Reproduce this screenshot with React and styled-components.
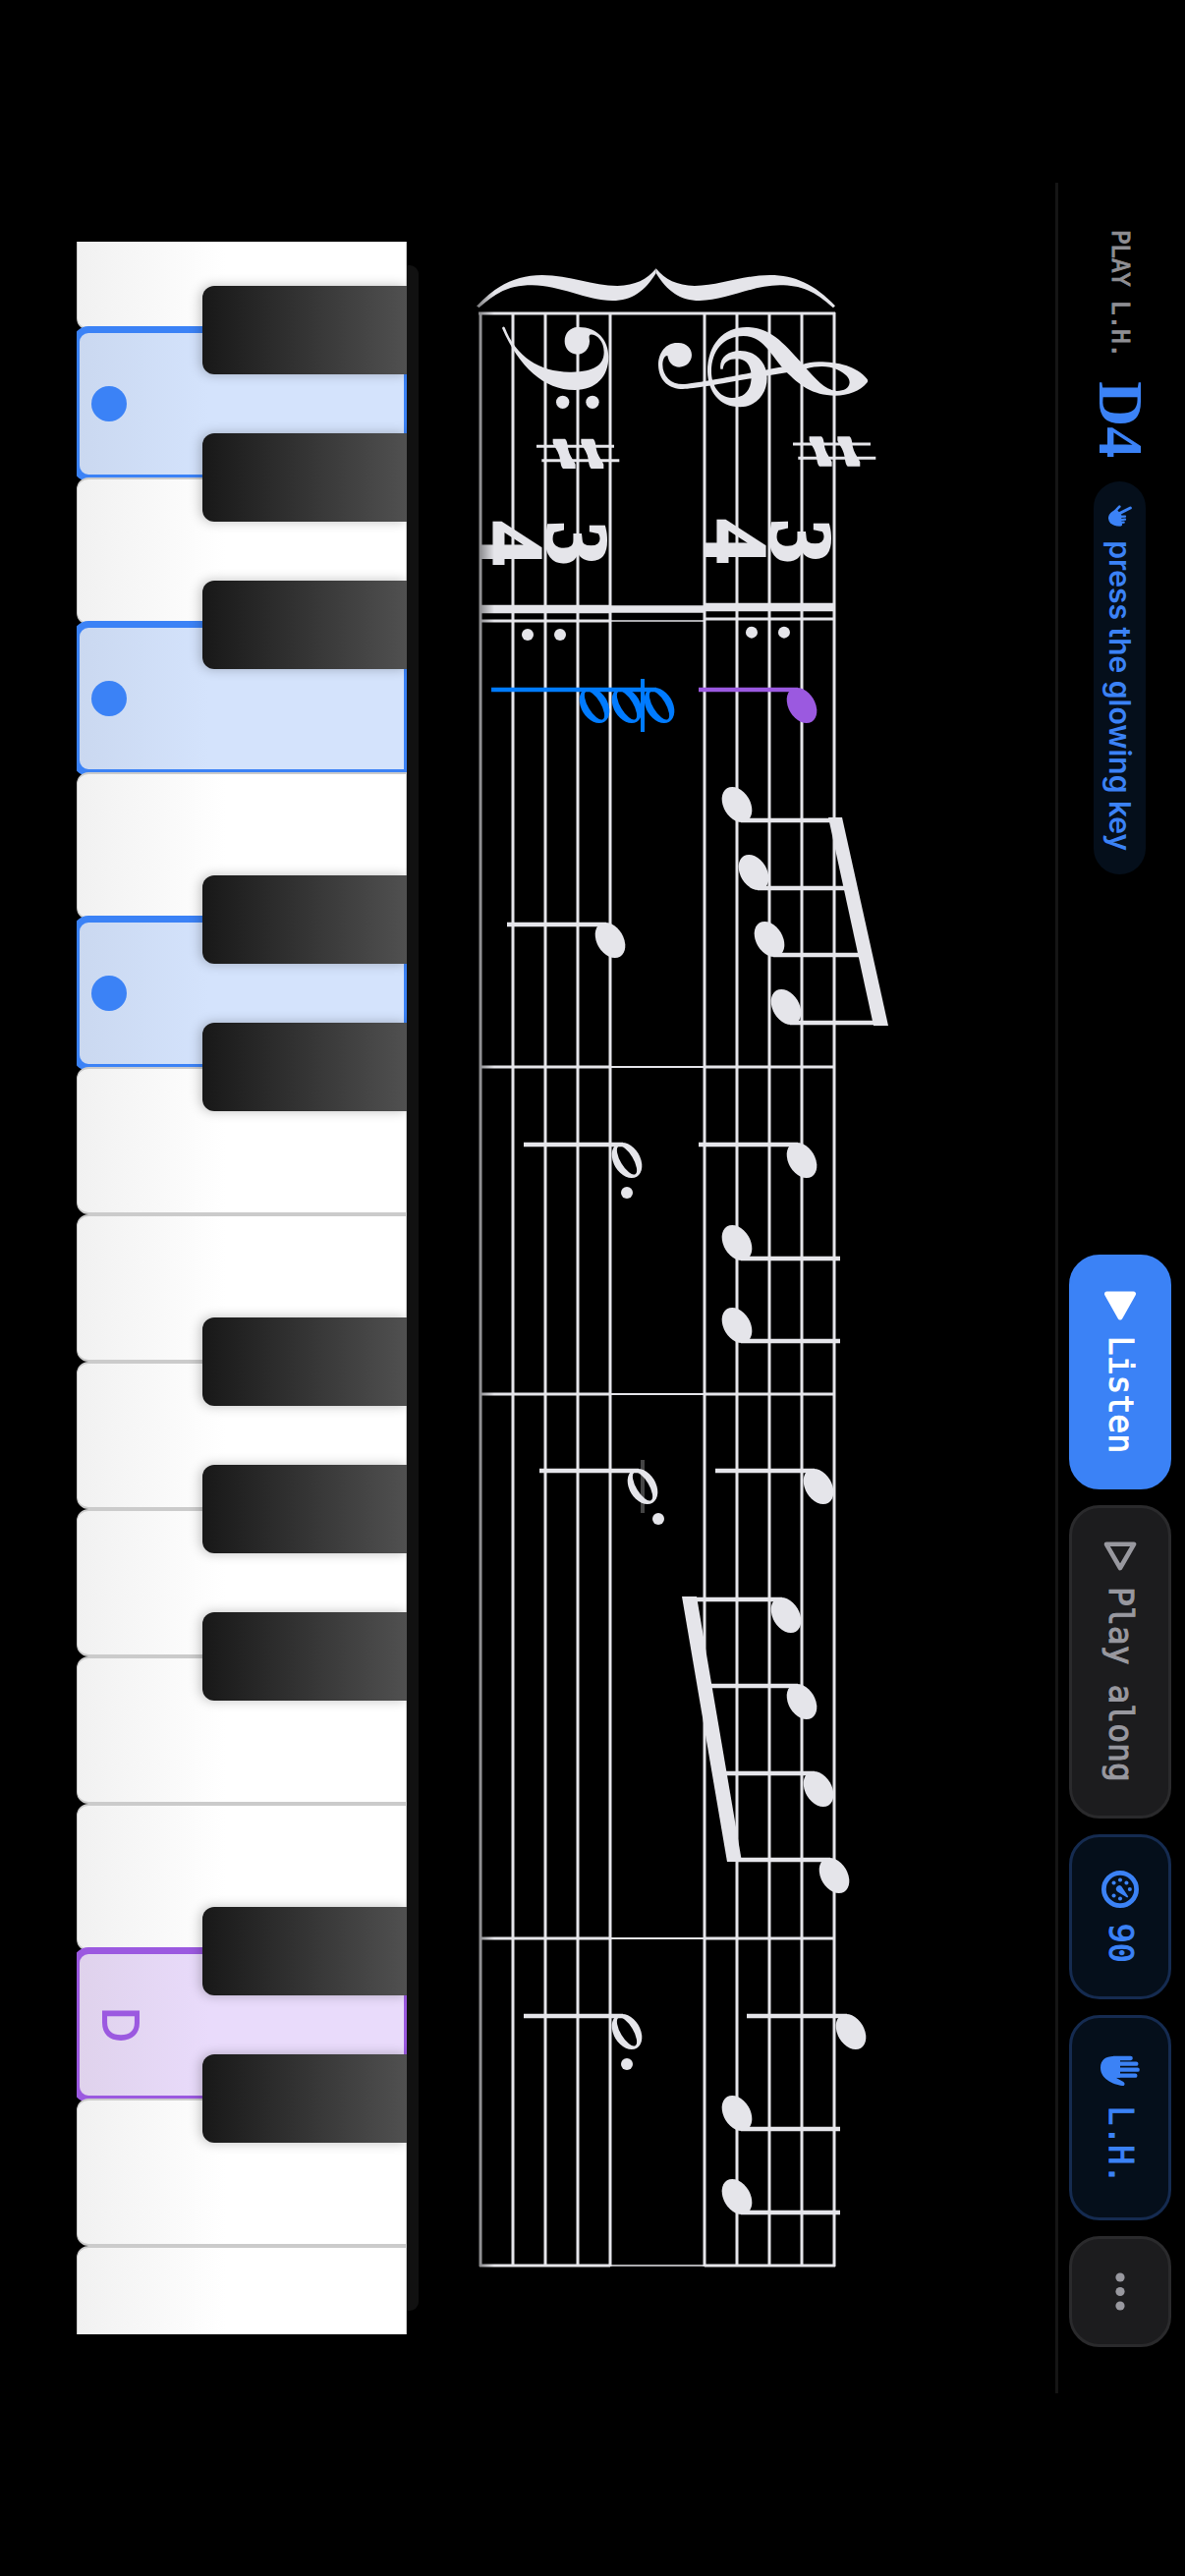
import styled, { createGlobalStyle } from 'styled-components';

const colors = {
  blue: '#3b82f6',
  chord: '#007bff',
  purple: '#9b59e0',
  ink: '#e5e5ea',
  muted: '#98989f',
};

const mono = "'DejaVu Sans Mono', 'Liberation Mono', monospace";
const sans = "Inter, 'Liberation Sans', sans-serif";
const serif = "'Liberation Serif', serif";

const GlobalStyle = createGlobalStyle`
  * {
    box-sizing: border-box;
  }

  body {
    margin: 0;
    background: #000;
    overflow: hidden;
  }
`;

const Screen = styled.div`
  width: 100vw;
  height: 100vh;
  overflow: hidden;
  background: #000;
`;

const Stage = styled.main`
  display: flex;
  flex-direction: column;
  width: 100vh;
  height: 100vw;
  padding: 0 186px 78px;
  transform-origin: 0 0;
  transform: translateX(100vw) rotate(90deg);
`;

const Toolbar = styled.header`
  display: flex;
  align-items: center;
  justify-content: space-between;
  height: 132px;
  padding: 3px 48px 0;
  border-bottom: 3px solid #151515;
`;

const Prompt = styled.div`
  display: flex;
  align-items: center;
  gap: 24px;
`;

const PromptLabel = styled.span`
  font: 400 24px/30px ${mono};
  -webkit-text-stroke: 1px currentColor;
  color: #8e8e93;
`;

const PromptNote = styled.strong`
  font: 700 64px/64px ${serif};
  color: ${colors.blue};
`;

const Hint = styled.span`
  display: flex;
  align-items: center;
  gap: 14px;
  height: 53px;
  padding: 0 24px;
  border-radius: 27px;
  background: #050f1b;
  color: ${colors.blue};
  font: 600 30px/36px ${sans};
`;

const Actions = styled.div`
  display: flex;
  align-items: center;
  gap: 18px;
`;

const variants = {
  primary: { bg: colors.blue, line: colors.blue, text: '#fff' },
  plain: { bg: '#1c1c1e', line: '#2a2a2c', text: colors.muted },
  tinted: { bg: '#050f1b', line: '#152b50', text: colors.blue },
};

const Button = styled.button`
  display: flex;
  align-items: center;
  justify-content: center;
  gap: 16px;
  height: 102px;
  padding: 0 36px;
  border: none;
  border-radius: 30px;
  outline: 3px solid ${({ $variant }) => variants[$variant].line};
  outline-offset: -2px;
  background: ${({ $variant }) => variants[$variant].bg};
  color: ${({ $variant }) => variants[$variant].text};
  font: 400 33px/40px ${mono};
  -webkit-text-stroke: 1px currentColor;
  cursor: pointer;
`;

const ScoreArea = styled.section`
  flex: 1;
  min-height: 0;

  svg {
    display: block;
    width: 100%;
    height: 100%;
  }
`;

const Felt = styled.div`
  height: 12px;
  margin: 0 84px;
  border-radius: 9px 9px 0 0;
  background: #111;
`;

const Keyboard = styled.section`
  display: flex;
  justify-content: center;
  height: 336px;
  margin: 0 60px;
  overflow: hidden;
`;

const KeySlot = styled.div`
  position: relative;
  flex: 0 0 150px;
`;

const keyFill = {
  blue: 'linear-gradient(#d4e3fc 60%, #cad8f0)',
  purple: 'linear-gradient(#e9dbfb 60%, #dfd2ec)',
  none: 'linear-gradient(#fff 55%, #f1f1f1)',
};

const WhiteKey = styled.button`
  display: flex;
  align-items: flex-end;
  justify-content: center;
  width: 100%;
  height: 100%;
  padding: 0 0 14px;
  border: solid #cbcbcb;
  border-width: 1px 2px 1px 2px;
  border-radius: 0 0 12px 12px;
  background: ${({ $lit }) => keyFill[$lit || 'none']};
  color: ${({ $lit }) => colors[$lit] || '#000'};
  outline: ${({ $lit }) => ($lit ? `7px solid ${colors[$lit]}` : 'none')};
  outline-offset: -3px;
  font: 500 52px/58px ${sans};
`;

const BlackKey = styled.button`
  position: absolute;
  z-index: 1;
  top: 0;
  right: -45px;
  width: 90px;
  height: 208px;
  padding: 0;
  border: none;
  border-radius: 0 0 12px 12px;
  background: linear-gradient(#505050, #181818);
  box-shadow: 0 2px 12px rgba(0, 0, 0, 0.25);
`;

const FingerDot = styled.span`
  width: 36px;
  height: 36px;
  border-radius: 50%;
  background: ${colors.blue};
`;

/* ---------- icons ---------- */

const PlayIcon = ({ filled }) => (
  <svg width="30" height="34" viewBox="0 0 30 34" aria-hidden="true">
    <path
      d={filled ? 'M3 3.5 V30.5 L27 17 Z' : 'M2.8 3 V31 L27 17 Z'}
      fill={filled ? 'currentColor' : 'none'}
      stroke="currentColor"
      strokeWidth={filled ? 5 : 4.6}
      strokeLinejoin="round"
    />
  </svg>
);

const PointIcon = () => (
  <svg width="22" height="24" viewBox="0 0 66 72" fill="currentColor" aria-hidden="true">
    <g stroke="currentColor" strokeLinecap="round">
      <path d="M32 50 L9 5" strokeWidth="9" />
      <path d="M28 60 L5 38" strokeWidth="8" />
      <path d="M36 44 L35 21 M46 44 L44 21 M54 46 L53 25 M60 48 L60 33" strokeWidth="7" />
    </g>
    <path d="M14 46 L30 32 H64 C67 52 58 72 40 72 C28 72 18 62 14 46 Z" />
  </svg>
);

const TempoIcon = () => (
  <svg width="38" height="38" viewBox="0 0 112 112" fill="currentColor" aria-hidden="true">
    <circle cx="56" cy="56" r="49" fill="none" stroke="currentColor" strokeWidth="14" />
    <circle cx="37" cy="75" r="6" />
    <circle cx="28" cy="56" r="6" />
    <circle cx="37" cy="37" r="6" />
    <circle cx="56" cy="27" r="6" />
    <circle cx="75" cy="75" r="6" />
    <circle cx="84" cy="56" r="6" />
    <path d="M47 52 L77 32 Q82 31 80 36 L63 64 A10 10 0 1 1 47 52 Z" />
  </svg>
);

const HandIcon = () => (
  <svg width="40" height="40" viewBox="-14 0 120 120" fill="currentColor" aria-hidden="true">
    <path
      d="M7 28 V80 M24 11 V80 M42 7 V80 M60 14 V80"
      stroke="currentColor"
      strokeWidth="13"
      strokeLinecap="round"
    />
    <path d="M1 60 H66 V73 L79 50 Q85 43 91 49 C90 72 74 120 36 120 C12 120 1 104 1 80 Z" />
  </svg>
);

const MoreIcon = () => (
  <svg width="39" height="10" viewBox="0 0 39 10" fill="currentColor" aria-hidden="true">
    <circle cx="5" cy="5" r="4.6" />
    <circle cx="19.5" cy="5" r="4.6" />
    <circle cx="34" cy="5" r="4.6" />
  </svg>
);

/* ---------- score ---------- */

const SCORE_START = 132;
const SCORE_END = 2121;
const trebleLines = [225, 258, 291, 324, 357];
const bassLines = [453, 486, 519, 552, 585];
const barLines = [900, 1233, 1787];

// x, y: centre of the head. stem: y where the stem ends. up: stem on the right
const notes = [
  { x: 532, y: 258, stem: 363, color: colors.purple },
  { x: 633, y: 324, stem: 225, up: true },
  { x: 702, y: 307, stem: 208, up: true },
  { x: 770, y: 291, stem: 195, up: true },
  { x: 839, y: 274, stem: 172, up: true },
  { x: 771, y: 453, stem: 558 },
  { x: 995, y: 258, stem: 363 },
  { x: 995, y: 436, stem: 541, half: true, dot: 436 },
  { x: 1079, y: 324, stem: 219, up: true },
  { x: 1163, y: 324, stem: 219, up: true },
  { x: 1327, y: 241, stem: 346 },
  { x: 1327, y: 420, stem: 525, half: true, dot: 404, ledger: 420 },
  { x: 1458, y: 274, stem: 372 },
  { x: 1546, y: 258, stem: 355 },
  { x: 1635, y: 241, stem: 340 },
  { x: 1723, y: 225, stem: 325 },
  { x: 1882, y: 208, stem: 314 },
  { x: 1882, y: 436, stem: 541, half: true, dot: 436 },
  { x: 1965, y: 324, stem: 219, up: true },
  { x: 2050, y: 324, stem: 219, up: true },
];

const halfHead =
  'M-19.5 0 A19.5 13.5 0 1 1 19.5 0 A19.5 13.5 0 1 1 -19.5 0 Z M-16.5 0 A16.5 6.4 0 1 0 16.5 0 A16.5 6.4 0 1 0 -16.5 0 Z';

const Head = ({ x, y, half }) => (
  <g transform={`translate(${x} ${y}) rotate(-31)`}>
    {half ? <path d={halfHead} fillRule="evenodd" /> : <ellipse rx="19.5" ry="13.5" />}
  </g>
);

const Note = ({ x, y, stem, up, half, dot, ledger, color = colors.ink }) => {
  const stemX = up ? x + 16 : x - 16;
  return (
    <g fill={color} stroke="none">
      {ledger && <rect x={x - 27} y={ledger - 2} width="54" height="4" fill="#444" />}
      <path d={`M${stemX} ${up ? y - 4 : y + 4} V${stem}`} stroke={color} strokeWidth="4.5" />
      <Head x={x} y={y} half={half} />
      {dot && <circle cx={x + 33} cy={dot} r="6" />}
    </g>
  );
};

// The engraved symbols are drawn on their side, three units to the pixel
const sideways = 'translate(64 604) rotate(-90) scale(0.3333)';

const braceHalf =
  'M46 184 C108 118 170 90 245 90 C330 90 400 123 475 123 C530 121 565 105 593 70 V84 C560 138 520 168 460 168 C380 168 300 121 215 121 C150 121 110 138 52 190 Z';

const Sharp = () => (
  <g>
    <path d="M228 613 H465 M244 656 H481" stroke={colors.ink} strokeWidth="9" />
    {[0, 86].map((dx) => (
      <path
        key={dx}
        transform={`translate(${dx} 0)`}
        d="M278 590 H315 C324 598 322 612 326 626 C331 645 340 652 347 668 V681 H309 C300 672 302 655 297 640 C291 620 282 616 278 602 Z"
      />
    ))}
  </g>
);

const BassClef = () => (
  <g>
    <path d="M352 249 C410 246 448 285 448 340 C448 400 410 441 345 441 C250 441 175 370 123 252 Q126 244 131 250 C165 340 240 388 335 386 C405 385 434 365 434 325 C434 292 412 270 392 272 C386 276 391 285 390 293 C389 315 374 332 352 332 C330 332 314 314 314 292 C314 266 332 250 352 249 Z" />
    <circle cx="308" cy="478" r="20" />
    <circle cx="399" cy="478" r="20" />
  </g>
);

const TrebleClef = () => (
  <g>
    <path d="M662 297 C625 294 600 325 600 365 C602 415 635 438 675 438 C720 437 850 410 1000 386 L1040 378 V360 C1000 364 760 414 680 423 C640 425 613 400 613 362 C614 345 620 336 628 336 C632 358 645 371 664 371 C686 371 702 354 702 334 C702 313 686 298 662 297 Z" />
    <path
      fillRule="evenodd"
      d="M1042 362 C990 310 950 249 870 249 C800 249 750 300 750 385 C752 445 785 493 850 493 C900 493 932 450 932 405 C932 355 895 321 850 321 C810 321 785 345 790 377 L797 377 C800 355 815 346 842 346 C870 346 884 370 884 400 C884 440 865 465 825 465 C785 465 762 425 762 385 C762 320 800 276 860 276 C920 276 940 330 990 385 C1030 425 1070 458 1140 458 C1180 458 1215 445 1238 418 Q1241 413 1238 408 C1205 368 1150 355 1090 355 C1070 355 1055 358 1042 362 Z M1052 376 C1085 366 1120 366 1145 378 C1175 392 1184 405 1184 418 C1183 435 1168 444 1145 444 C1105 440 1080 405 1052 376 Z"
    />
  </g>
);

const TimeDigit = styled.text`
  font: 700 88px ${serif};
  text-anchor: middle;
  fill: ${colors.ink};
  stroke: ${colors.ink};
  stroke-width: 3px;
`;

const Score = () => (
  <svg viewBox="0 0 2250 648" fill={colors.ink} role="img" aria-label="Grand staff, G major, three four time">
    <defs>
      <linearGradient id="edge" x1="0" y1="0" x2="0" y2="1">
        <stop offset="0" stopColor="#000" stopOpacity="0" />
        <stop offset="1" stopColor="#000" stopOpacity="0.45" />
      </linearGradient>
    </defs>

    <g stroke={colors.ink} strokeWidth="3">
      {[...trebleLines, ...bassLines].map((y) => (
        <path key={y} d={`M${SCORE_START} ${y} H${SCORE_END}`} />
      ))}
      {barLines.map((x) => (
        <g key={x}>
          <path d={`M${x} 225 V357 M${x} 453 V586`} strokeWidth="3" />
          <path d={`M${x} 357 V453`} strokeWidth="2" />
        </g>
      ))}
      <path d="M133 224 V587" strokeWidth="3" />
      <path d="M2120 224 V357 M2120 453 V586" strokeWidth="3" />
      <path d="M2120 357 V453" strokeWidth="1.6" />
      <path d="M444 224 V357 M446 453 V586" strokeWidth="3" />
      <path d="M446 357 V453" strokeWidth="1.6" />
      <path d="M432 224 V357 M434 453 V586" strokeWidth="8.4" />
      <path d="M434 358 V452" strokeWidth="7.4" />
    </g>

    <g transform={sideways}>
      <path d={braceHalf} />
      <path d={braceHalf} transform="translate(1186 0) scale(-1 1)" />
      <BassClef />
      <TrebleClef />
      <Sharp />
      <g transform="translate(783 -7)">
        <Sharp />
      </g>
      <circle cx="201" cy="1188" r="18" />
      <circle cx="300" cy="1188" r="18" />
      <circle cx="885" cy="1181" r="18" />
      <circle cx="984" cy="1181" r="18" />
    </g>

    <TimeDigit x="365" y="288">3</TimeDigit>
    <TimeDigit x="365" y="354">4</TimeDigit>
    <TimeDigit x="367" y="516">3</TimeDigit>
    <TimeDigit x="367" y="582">4</TimeDigit>

    {/* beams */}
    <path d="M646 231 V217 L858 170 V185 Z" />
    <path d="M1439 380 V365 L1709 319 V334 Z" />

    {notes.map((note) => (
      <Note key={`${note.x}-${note.y}`} {...note} />
    ))}

    {/* left hand chord */}
    <g fill={colors.chord}>
      <path d="M516 574 V406" stroke={colors.chord} strokeWidth="4.5" />
      <path d="M505 420 H559" stroke={colors.chord} strokeWidth="4" />
      <Head x={532} y={469} half />
      <Head x={532} y={436} half />
      <Head x={532} y={403} half />
    </g>

    <rect x="100" y="571" width="2030" height="17" fill="url(#edge)" />
  </svg>
);

/* ---------- keyboard ---------- */

const keys = [
  { note: 'F2', sharp: true },
  { note: 'G2', sharp: true, lit: 'blue' },
  { note: 'A2', sharp: true },
  { note: 'B2', lit: 'blue' },
  { note: 'C3', sharp: true },
  { note: 'D3', sharp: true, lit: 'blue' },
  { note: 'E3' },
  { note: 'F3', sharp: true },
  { note: 'G3', sharp: true },
  { note: 'A3', sharp: true },
  { note: 'B3' },
  { note: 'C4', sharp: true },
  { note: 'D4', sharp: true, lit: 'purple', label: 'D' },
  { note: 'E4' },
  { note: 'F4' },
];

const App = () => (
  <Screen>
    <GlobalStyle />
    <Stage>
      <Toolbar>
        <Prompt>
          <PromptLabel>PLAY L.H.</PromptLabel>
          <PromptNote>D4</PromptNote>
          <Hint>
            <PointIcon />
            press the glowing key
          </Hint>
        </Prompt>
        <Actions>
          <Button $variant="primary">
            <PlayIcon filled />
            Listen
          </Button>
          <Button $variant="plain">
            <PlayIcon />
            Play along
          </Button>
          <Button $variant="tinted">
            <TempoIcon />
            90
          </Button>
          <Button $variant="tinted">
            <HandIcon />
            L.H.
          </Button>
          <Button $variant="plain" aria-label="More">
            <MoreIcon />
          </Button>
        </Actions>
      </Toolbar>

      <ScoreArea>
        <Score />
      </ScoreArea>

      <Felt />
      <Keyboard>
        {keys.map(({ note, sharp, lit, label }) => (
          <KeySlot key={note}>
            <WhiteKey $lit={lit} aria-label={note}>
              {label}
              {lit && !label && <FingerDot />}
            </WhiteKey>
            {sharp && <BlackKey aria-label={`${note} sharp`} />}
          </KeySlot>
        ))}
      </Keyboard>
    </Stage>
  </Screen>
);

export default App;
